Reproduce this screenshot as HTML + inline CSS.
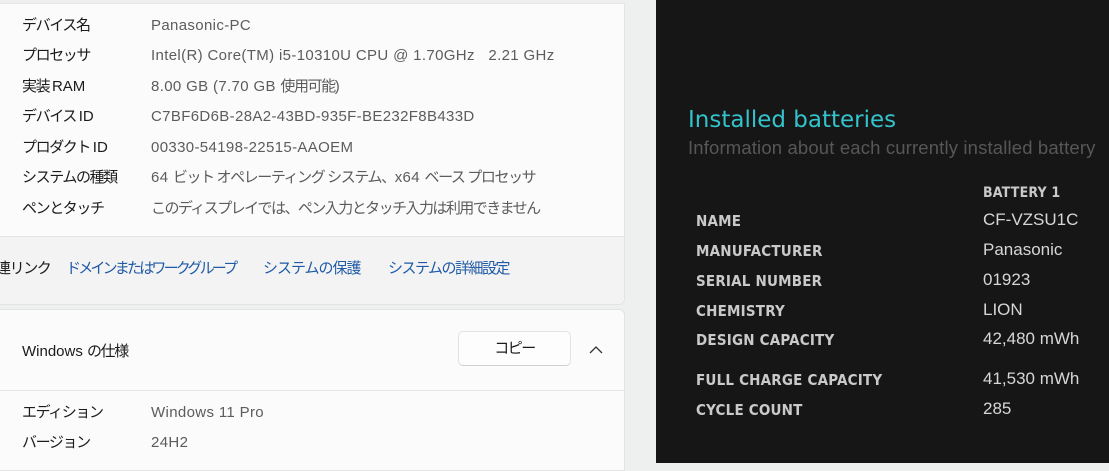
<!DOCTYPE html>
<html><head><meta charset="utf-8"><style>
body{margin:0;width:1109px;height:463px;overflow:hidden;background:#eeefef;position:relative;font-family:"Liberation Sans","Noto Sans CJK JP",sans-serif}
.abs{position:absolute;white-space:nowrap;line-height:20px}
.card1{left:0;top:3px;width:624px;height:233px;background:#fbfbfb;border-right:1px solid #e3e3e3;border-top:1px solid #e5e5e5}
.band{left:0;top:236px;width:624px;height:67px;background:#f3f3f3;border:1px solid #e3e3e3;border-left:none;border-radius:0 0 6px 0}
.card2{left:0;top:309px;width:624px;height:160px;background:#fbfbfb;border:1px solid #e3e3e3;border-left:none;border-radius:0 6px 0 0}
.l{font-size:15px;color:#1b1b1b}
.v{font-size:15px;color:#5c5c5c;letter-spacing:.35px}
.j{letter-spacing:-1.4px}
.dark{left:656px;top:0;width:453px;height:463px;background:#161616}
.dl{font-size:15px;font-weight:bold;color:#c9c9c9;font-family:"DejaVu Sans Condensed","Liberation Sans",sans-serif;letter-spacing:.2px}
.dv{font-size:17px;color:#d6d6d6}
.lk{font-size:15px;color:#1f5aa6}
</style></head><body>
<div class="abs card1"></div>
<div class="abs band"></div>
<div class="abs card2"></div>
<div class="abs l j" style="left:22px;top:16px">デバイス名</div><div class="abs v" style="left:151px;top:16px">Panasonic-PC</div>
<div class="abs l j" style="left:22px;top:46px">プロセッサ</div><div class="abs v" style="left:151px;top:46px">Intel(R) Core(TM) i5-10310U CPU @ 1.70GHz &nbsp; 2.21 GHz</div>
<div class="abs l" style="left:22px;top:77px"><span class="j">実装 </span>RAM</div><div class="abs v" style="left:151px;top:77px">8.00 GB (7.70 GB <span class="j">使用可能</span>)</div>
<div class="abs l" style="left:22px;top:107px"><span class="j">デバイス </span>ID</div><div class="abs v" style="left:151px;top:107px">C7BF6D6B-28A2-43BD-935F-BE232F8B433D</div>
<div class="abs l" style="left:22px;top:138px"><span class="j">プロダクト </span>ID</div><div class="abs v" style="left:151px;top:138px">00330-54198-22515-AAOEM</div>
<div class="abs l j" style="left:22px;top:168px">システムの種類</div><div class="abs v" style="left:151px;top:168px">64 <span class="j">ビット オペレーティング システム、</span>x64 <span class="j">ベース プロセッサ</span></div>
<div class="abs l j" style="left:22px;top:199px">ペンとタッチ</div><div class="abs v j" style="left:151px;top:199px;letter-spacing:-1.55px">このディスプレイでは、ペン入力とタッチ入力は利用できません</div>
<div class="abs l j" style="left:-4px;top:259px">連リンク</div>
<div class="abs lk" style="left:66px;top:259px;letter-spacing:-2.8px">ドメインまたはワークグループ</div>
<div class="abs lk" style="left:263px;top:259px;letter-spacing:-1px">システムの保護</div>
<div class="abs lk" style="left:388px;top:259px;letter-spacing:-1.5px">システムの詳細設定</div>
<div class="abs l" style="left:22px;top:342px">Windows <span class="j">の仕様</span></div>
<div class="abs" style="left:458px;top:331px;width:113px;height:35px;background:#fdfdfd;border:1px solid #e2e2e2;border-bottom-color:#cfcfcf;border-radius:5px;box-sizing:border-box;font-size:15px;color:#1b1b1b;text-align:center;line-height:33px;letter-spacing:-1.5px">コピー</div>
<svg class="abs" style="left:588px;top:344px" width="16" height="12"><path d="M2 9 L8 3 L14 9" fill="none" stroke="#333" stroke-width="1.3"/></svg>
<div class="abs" style="left:0;top:390px;width:624px;height:1px;background:#e6e6e6"></div>
<div class="abs l j" style="left:22px;top:403px">エディション</div><div class="abs v" style="left:151px;top:403px">Windows 11 Pro</div>
<div class="abs l j" style="left:22px;top:433px">バージョン</div><div class="abs v" style="left:151px;top:433px">24H2</div>
<div class="abs dark"></div>
<div class="abs" style="left:688px;top:107px;font-size:23px;line-height:26px;color:#34c3cc;font-family:'DejaVu Sans','Liberation Sans',sans-serif">Installed batteries</div>
<div class="abs" style="left:688px;top:137px;font-size:18.5px;line-height:22px;color:#575757;letter-spacing:.15px">Information about each currently installed battery</div>
<div class="abs dl" style="left:983px;top:183px;font-size:14px">BATTERY 1</div>
<div class="abs dl" style="left:696px;top:211px">NAME</div><div class="abs dv" style="left:983px;top:210px">CF-VZSU1C</div>
<div class="abs dl" style="left:696px;top:241px">MANUFACTURER</div><div class="abs dv" style="left:983px;top:240px">Panasonic</div>
<div class="abs dl" style="left:696px;top:271px">SERIAL NUMBER</div><div class="abs dv" style="left:983px;top:270px">01923</div>
<div class="abs dl" style="left:696px;top:301px">CHEMISTRY</div><div class="abs dv" style="left:983px;top:300px">LION</div>
<div class="abs dl" style="left:696px;top:330px">DESIGN CAPACITY</div><div class="abs dv" style="left:983px;top:329px">42,480 mWh</div>
<div class="abs dl" style="left:696px;top:370px">FULL CHARGE CAPACITY</div><div class="abs dv" style="left:983px;top:369px">41,530 mWh</div>
<div class="abs dl" style="left:696px;top:400px">CYCLE COUNT</div><div class="abs dv" style="left:983px;top:399px">285</div>
</body></html>
